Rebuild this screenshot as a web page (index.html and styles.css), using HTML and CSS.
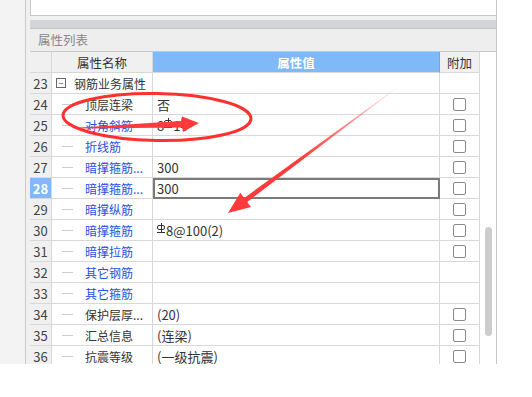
FILE: index.html
```html
<!DOCTYPE html>
<html lang="zh-CN">
<head>
    <meta charset="UTF-8">
    <title>属性列表</title>
    <link rel="stylesheet" href="styles.css">
</head>
<body>
    <div class="app">
        <div class="side"></div>
        <div class="panel">
            <div class="top-box"></div>
            <div class="band"></div>
            <div class="title">属性列表</div>
            <div class="table-wrap">
                <div class="grid">
                    <div class="cell num head"></div>
                    <div class="cell head center">属性名称</div>
                    <div class="cell head value-head center">属性值</div>
                    <div class="cell head center">附加</div>

                    <div class="cell num">23</div>
                    <div class="cell name group"><span class="toggle">−</span>钢筋业务属性</div>
                    <div class="cell"></div>
                    <div class="cell"></div>

                    <div class="cell num">24</div>
                    <div class="cell name"><span class="branch"></span>顶层连梁</div>
                    <div class="cell val">否</div>
                    <div class="cell center"><span class="check"></span></div>

                    <div class="cell num">25</div>
                    <div class="cell name link"><span class="branch"></span>对角斜筋</div>
                    <div class="cell val">8<span class="rebar"></span>14</div>
                    <div class="cell center"><span class="check"></span></div>

                    <div class="cell num">26</div>
                    <div class="cell name link"><span class="branch"></span>折线筋</div>
                    <div class="cell val"></div>
                    <div class="cell center"><span class="check"></span></div>

                    <div class="cell num">27</div>
                    <div class="cell name link"><span class="branch"></span>暗撑箍筋...</div>
                    <div class="cell val">300</div>
                    <div class="cell center"><span class="check"></span></div>

                    <div class="cell num active">28</div>
                    <div class="cell name link"><span class="branch"></span>暗撑箍筋...</div>
                    <div class="cell val editing">300</div>
                    <div class="cell center"><span class="check"></span></div>

                    <div class="cell num">29</div>
                    <div class="cell name link"><span class="branch"></span>暗撑纵筋</div>
                    <div class="cell val"></div>
                    <div class="cell center"><span class="check"></span></div>

                    <div class="cell num">30</div>
                    <div class="cell name link"><span class="branch"></span>暗撑箍筋</div>
                    <div class="cell val"><span class="rebar"></span>8@100(2)</div>
                    <div class="cell center"><span class="check"></span></div>

                    <div class="cell num">31</div>
                    <div class="cell name link"><span class="branch"></span>暗撑拉筋</div>
                    <div class="cell val"></div>
                    <div class="cell center"><span class="check"></span></div>

                    <div class="cell num">32</div>
                    <div class="cell name link"><span class="branch"></span>其它钢筋</div>
                    <div class="cell val"></div>
                    <div class="cell"></div>

                    <div class="cell num">33</div>
                    <div class="cell name link"><span class="branch"></span>其它箍筋</div>
                    <div class="cell val"></div>
                    <div class="cell"></div>

                    <div class="cell num">34</div>
                    <div class="cell name"><span class="branch"></span>保护层厚...</div>
                    <div class="cell val">(20)</div>
                    <div class="cell center"><span class="check"></span></div>

                    <div class="cell num">35</div>
                    <div class="cell name"><span class="branch"></span>汇总信息</div>
                    <div class="cell val">(连梁)</div>
                    <div class="cell center"><span class="check"></span></div>

                    <div class="cell num">36</div>
                    <div class="cell name"><span class="branch"></span>抗震等级</div>
                    <div class="cell val">(一级抗震)</div>
                    <div class="cell center"><span class="check"></span></div>
                </div>
                <div class="scroll">
                    <div class="thumb"></div>
                </div>
            </div>
        </div>
    </div>

    <svg class="marks" width="532" height="397" viewBox="0 0 532 397">
        <defs>
            <linearGradient id="fade" x1="402" y1="84" x2="300" y2="160" gradientUnits="userSpaceOnUse">
                <stop offset="0" stop-color="#ff3a3a" stop-opacity="0.15"/>
                <stop offset="1" stop-color="#ff3a3a"/>
            </linearGradient>
        </defs>
        <ellipse cx="157" cy="117" rx="94" ry="23.5" transform="rotate(1 157 117)" fill="none" stroke="#ff3030" stroke-width="3"/>
        <polygon points="80,127.5 181,121 182,116.5 199,123 183,132 182,127.5 80,128.5" fill="#ff3a3a"/>
        <polygon points="402,84 247.2,201.9 251,207 228,213 240.3,192.7 244.2,197.9" fill="url(#fade)"/>
    </svg>
</body>
</html>
```

FILE: styles.css
```css
body {
    margin: 0;
    background-color: #FFFFFF;
    font-family: "Noto Sans CJK SC", "Noto Sans", sans-serif;
    font-size: 12px;
    color: #333333;
}
.app {
    display: flex;
    height: 364px;
    overflow: hidden;
}
.side {
    width: 25px;
    background-color: #F3F3F3;
    border-right: 1px solid #C8C8C8;
}
.panel {
    width: 466px;
    padding-left: 4px;
    background-color: #F0F0F0;
    border-right: 1px solid #C8C8C8;
    display: flex;
    flex-direction: column;
}
.top-box {
    flex-shrink: 0;
    height: 15px;
    background-color: #FFFFFF;
    border: 1px solid #C8C8C8;
    border-top: none;
    border-right: none;
}
.band {
    flex-shrink: 0;
    height: 8px;
    margin-top: 4px;
    background-color: #D4D5D9;
    border-bottom: 1px solid #C2C3C7;
}
.title {
    flex-shrink: 0;
    height: 22px;
    line-height: 22px;
    padding-left: 8px;
    background-color: #EEEEEE;
    color: #888888;
    font-size: 12.5px;
}
.table-wrap {
    display: flex;
    flex: 1;
    min-height: 0;
    overflow: hidden;
    border-top: 1px solid #C8C8C8;
}
.grid {
    display: grid;
    grid-template-columns: 22px 101px 287px 40px;
    grid-auto-rows: 21px;
    align-content: start;
    background-color: #FFFFFF;
}
.cell {
    box-sizing: border-box;
    border-right: 1px solid #D8D8D8;
    border-bottom: 1px solid #D8D8D8;
    display: flex;
    align-items: center;
    white-space: nowrap;
    overflow: hidden;
}
.center {
    justify-content: center;
}
.head {
    background-color: #F0F0F0;
    font-size: 12.5px;
}
.value-head {
    background-color: #7FB9F7;
    color: #FFFFFF;
    font-weight: bold;
    border-right-color: #6AA6E8;
}
.num {
    justify-content: center;
    background-color: #F0F0F0;
    font-size: 13px;
    color: #444444;
}
.num.active {
    background-color: #7FB9F7;
    color: #FFFFFF;
    font-weight: bold;
}
.name {
    padding-left: 10px;
}
.name.group {
    padding-left: 4px;
}
.link {
    color: #1F4FE6;
}
.branch {
    width: 11px;
    height: 1px;
    margin-right: 12px;
    background-color: #CCCCCC;
}
.toggle {
    box-sizing: border-box;
    width: 10px;
    height: 10px;
    margin-right: 8px;
    border: 1px solid #666666;
    display: flex;
    align-items: center;
    justify-content: center;
    font-size: 9px;
    line-height: 1;
    color: #444444;
}
.val {
    padding-left: 4px;
    font-size: 13px;
}
.val.editing {
    border: 2px solid #7A7A7A;
    padding-left: 2px;
}
.rebar {
    display: inline-block;
    width: 8px;
    height: 10px;
    margin-right: 1px;
    position: relative;
    top: -2px;
    background:
        linear-gradient(#333333, #333333) 3.5px 0 / 1px 10px no-repeat,
        linear-gradient(#333333, #333333) 0 9px / 8px 1px no-repeat;
}
.rebar::before {
    content: "";
    position: absolute;
    left: 0;
    top: 2px;
    width: 8px;
    height: 5px;
    box-sizing: border-box;
    border: 1px solid #333333;
    border-radius: 2px;
}
.check {
    box-sizing: border-box;
    width: 13px;
    height: 13px;
    border: 1px solid #8A8A8A;
    border-radius: 2px;
    background-color: #FFFFFF;
}
.scroll {
    flex: 1;
    background-color: #FFFFFF;
    padding-top: 175px;
    display: flex;
    justify-content: center;
}
.thumb {
    width: 7px;
    height: 109px;
    border-radius: 4px;
    background-color: #CDCDCD;
}
.marks {
    position: absolute;
    left: 0;
    top: 0;
    pointer-events: none;
}
```
